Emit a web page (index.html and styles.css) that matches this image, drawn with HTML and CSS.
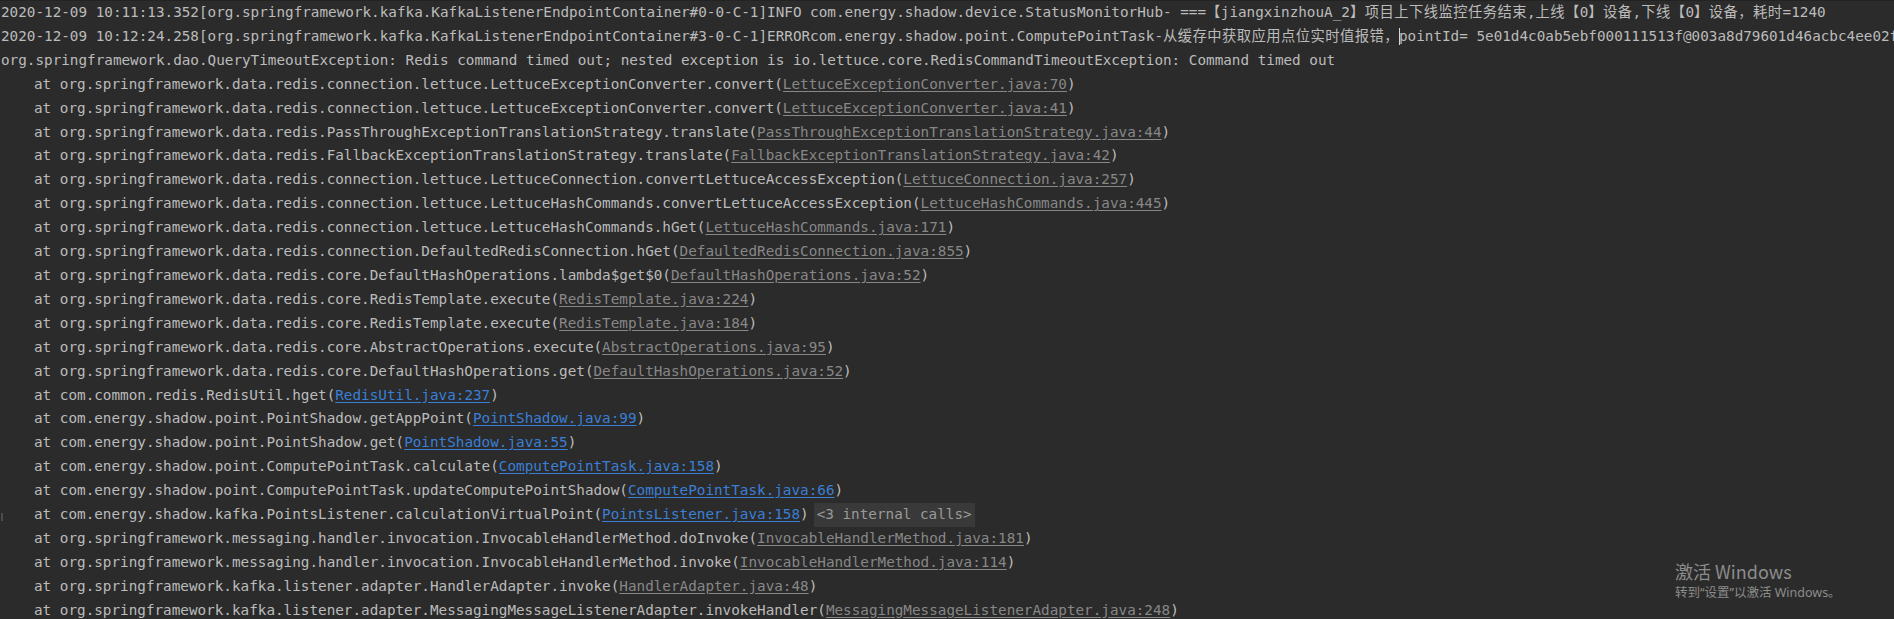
FILE: index.html
```html
<!DOCTYPE html>
<html lang="zh-CN">
  <head>
    <meta charset="UTF-8" />
    <title>Console</title>
    <link rel="stylesheet" href="styles.css">
  </head>
  <body>
    <div class="console">
      <div class="line">2020-12-09 10:11:13.352[org.springframework.kafka.KafkaListenerEndpointContainer#0-0-C-1]INFO com.energy.shadow.device.StatusMonitorHub- ===<span class="cjk">【</span>jiangxinzhouA_2<span class="cjk">】项目上下线监控任务结束</span>,<span class="cjk">上线【</span>0<span class="cjk">】设备</span>,<span class="cjk">下线【</span>0<span class="cjk">】设备，耗时</span>=1240</div>
      <div class="line">2020-12-09 10:12:24.258[org.springframework.kafka.KafkaListenerEndpointContainer#3-0-C-1]ERRORcom.energy.shadow.point.ComputePointTask-<span class="cjk">从缓存中获取应用点位实时值报错，</span><span class="caret"></span>pointId= 5e01d4c0ab5ebf000111513f@003a8d79601d46acbc4ee02f8a1c9e</div>
      <div class="line">org.springframework.dao.QueryTimeoutException: Redis command timed out; nested exception is io.lettuce.core.RedisCommandTimeoutException: Command timed out</div>
      <div class="line frame">at org.springframework.data.redis.connection.lettuce.LettuceExceptionConverter.convert(<span class="lib">LettuceExceptionConverter.java:70</span>)</div>
      <div class="line frame">at org.springframework.data.redis.connection.lettuce.LettuceExceptionConverter.convert(<span class="lib">LettuceExceptionConverter.java:41</span>)</div>
      <div class="line frame">at org.springframework.data.redis.PassThroughExceptionTranslationStrategy.translate(<span class="lib">PassThroughExceptionTranslationStrategy.java:44</span>)</div>
      <div class="line frame">at org.springframework.data.redis.FallbackExceptionTranslationStrategy.translate(<span class="lib">FallbackExceptionTranslationStrategy.java:42</span>)</div>
      <div class="line frame">at org.springframework.data.redis.connection.lettuce.LettuceConnection.convertLettuceAccessException(<span class="lib">LettuceConnection.java:257</span>)</div>
      <div class="line frame">at org.springframework.data.redis.connection.lettuce.LettuceHashCommands.convertLettuceAccessException(<span class="lib">LettuceHashCommands.java:445</span>)</div>
      <div class="line frame">at org.springframework.data.redis.connection.lettuce.LettuceHashCommands.hGet(<span class="lib">LettuceHashCommands.java:171</span>)</div>
      <div class="line frame">at org.springframework.data.redis.connection.DefaultedRedisConnection.hGet(<span class="lib">DefaultedRedisConnection.java:855</span>)</div>
      <div class="line frame">at org.springframework.data.redis.core.DefaultHashOperations.lambda$get$0(<span class="lib">DefaultHashOperations.java:52</span>)</div>
      <div class="line frame">at org.springframework.data.redis.core.RedisTemplate.execute(<span class="lib">RedisTemplate.java:224</span>)</div>
      <div class="line frame">at org.springframework.data.redis.core.RedisTemplate.execute(<span class="lib">RedisTemplate.java:184</span>)</div>
      <div class="line frame">at org.springframework.data.redis.core.AbstractOperations.execute(<span class="lib">AbstractOperations.java:95</span>)</div>
      <div class="line frame">at org.springframework.data.redis.core.DefaultHashOperations.get(<span class="lib">DefaultHashOperations.java:52</span>)</div>
      <div class="line frame">at com.common.redis.RedisUtil.hget(<span class="src">RedisUtil.java:237</span>)</div>
      <div class="line frame">at com.energy.shadow.point.PointShadow.getAppPoint(<span class="src">PointShadow.java:99</span>)</div>
      <div class="line frame">at com.energy.shadow.point.PointShadow.get(<span class="src">PointShadow.java:55</span>)</div>
      <div class="line frame">at com.energy.shadow.point.ComputePointTask.calculate(<span class="src">ComputePointTask.java:158</span>)</div>
      <div class="line frame">at com.energy.shadow.point.ComputePointTask.updateComputePointShadow(<span class="src">ComputePointTask.java:66</span>)</div>
      <div class="line frame folded">at com.energy.shadow.kafka.PointsListener.calculationVirtualPoint(<span class="src">PointsListener.java:158</span>)<span class="internal">&lt;3 internal calls&gt;</span></div>
      <div class="line frame">at org.springframework.messaging.handler.invocation.InvocableHandlerMethod.doInvoke(<span class="lib">InvocableHandlerMethod.java:181</span>)</div>
      <div class="line frame">at org.springframework.messaging.handler.invocation.InvocableHandlerMethod.invoke(<span class="lib">InvocableHandlerMethod.java:114</span>)</div>
      <div class="line frame">at org.springframework.kafka.listener.adapter.HandlerAdapter.invoke(<span class="lib">HandlerAdapter.java:48</span>)</div>
      <div class="line frame">at org.springframework.kafka.listener.adapter.MessagingMessageListenerAdapter.invokeHandler(<span class="lib">MessagingMessageListenerAdapter.java:248</span>)</div>
    </div>

    <!-- Windows activation watermark -->
    <div class="watermark">
      <div class="wm-title">激活 Windows</div>
      <div class="wm-sub">转到“设置”以激活 Windows。</div>
    </div>
  </body>
</html>
```

FILE: styles.css
```css
html,
body {
  margin: 0;
  height: 100%;
}

body {
  background: #2b2b2b;
  color: #bbbbbb;
  font-family: "DejaVu Sans Mono", "Noto Sans CJK SC", monospace;
  font-size: 14.3px;
  overflow: hidden;
  position: relative;
}

.console {
  border-top: 1px solid #232323;
  padding-left: 1px;
}

.line {
  height: 23.92px;
  line-height: 23.92px;
  white-space: pre;
  position: relative;
}

.frame {
  padding-left: 33px;
}

.cjk {
  letter-spacing: 0.45px;
}

.lib,
.src {
  text-decoration: underline;
  text-underline-offset: 2px;
}

.lib {
  color: #878787;
}

.src {
  color: #3a7fd6;
}

.internal {
  display: inline-block;
  margin-left: 5px;
  padding: 0 3px;
  background: #393939;
  color: #9a9a9a;
}

/* small fold marker in the gutter */
.folded::before {
  content: "";
  position: absolute;
  left: 0;
  top: 10px;
  width: 2px;
  height: 8px;
  background: #4a4a4a;
}

.caret {
  display: inline-block;
  width: 0;
  height: 17px;
  vertical-align: -4px;
  border-left: 1px solid #d8d8d8;
  margin-right: -1px;
}

.watermark {
  position: absolute;
  left: 1675px;
  top: 558px;
  color: #8c8c8c;
  font-family: "Noto Sans CJK SC", "Noto Sans", sans-serif;
}

.wm-title {
  font-size: 18px;
  line-height: 26px;
}

.wm-sub {
  font-family: "Noto Sans", "Noto Sans CJK SC", sans-serif;
  font-size: 12.5px;
  line-height: 18px;
}
```
